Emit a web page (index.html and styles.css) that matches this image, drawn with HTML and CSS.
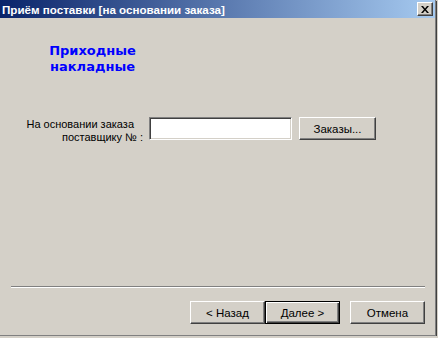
FILE: index.html
```html
<!DOCTYPE html>
<html lang="ru">
<head>
    <meta charset="UTF-8">
    <title>Приём поставки [на основании заказа]</title>
    <link rel="stylesheet" href="styles.css">
</head>
<body>

    <div class="window">
        <div class="titlebar">
            <span class="title">Приём поставки [на основании заказа]</span>
            <button class="close-btn" type="button" aria-label="Закрыть">
                <svg width="8" height="7" viewBox="0 0 8 7">
                    <path d="M0 0h2l2 2.5L6 0h2L5 3.5 8 7H6L4 4.5 2 7H0l3-3.5z" fill="#000"/>
                </svg>
            </button>
        </div>

        <div class="wizard-body">
            <h2 class="page-heading">Приходные<br>накладные</h2>

            <div class="order-row">
                <label class="order-label" for="orderNo">
                    <span class="first-line">На основании заказа</span><br>
                    поставщику № :
                </label>
                <input class="field" type="text" id="orderNo">
                <button class="btn" type="button">Заказы...</button>
            </div>

            <div class="spacer"></div>

            <div class="separator"></div>

            <div class="nav-row">
                <button class="btn nav-btn" type="button">&lt; Назад</button>
                <button class="btn nav-btn default" type="button">Далее &gt;</button>
                <button class="btn nav-btn cancel" type="button">Отмена</button>
            </div>
        </div>
    </div>

</body>
</html>
```

FILE: styles.css
```css
/* Klassisches Windows-Dialogfenster */
body {
    margin: 0;
    background-color: #d4d0c8;
    font-family: "Liberation Sans", Arial, sans-serif;
    font-size: 11px;
    color: #000000;
}

.window {
    width: 435px;
    height: 335px;
    display: flex;
    flex-direction: column;
    background-color: #d4d0c8;
    border-right: 1px solid #808080;
    border-bottom: 1px solid #808080;
    box-shadow: 1px 1px 0 #404040;
}

.titlebar {
    height: 18px;
    display: flex;
    align-items: center;
    justify-content: space-between;
    padding: 0 2px 0 2px;
    background: linear-gradient(to right, #0a246a, #a6caf0);
    color: #ffffff;
}

.title {
    font-family: "Liberation Sans", Arial, sans-serif;
    font-weight: bold;
    font-size: 11.6px;
    white-space: nowrap;
}

.close-btn {
    width: 16px;
    height: 14px;
    padding: 0;
    margin: 0;
    display: flex;
    align-items: center;
    justify-content: center;
    background-color: #d4d0c8;
    border: 1px solid;
    border-color: #ffffff #404040 #404040 #ffffff;
    box-shadow: inset -1px -1px 0 #808080;
}

.wizard-body {
    flex: 1;
    display: flex;
    flex-direction: column;
    padding: 25px 10px 11px 0;
}

.page-heading {
    width: 185px;
    margin: 0;
    text-align: center;
    font-family: "DejaVu Sans", Verdana, sans-serif;
    font-size: 13px;
    line-height: 16px;
    font-weight: bold;
    color: #0000ff;
}

.order-row {
    display: flex;
    align-items: flex-start;
    margin-top: 42px;
}

.order-label {
    width: 143px;
    padding-top: 1px;
    text-align: right;
    line-height: 13px;
}

.order-label .first-line {
    margin-right: 9px;
}

.field {
    box-sizing: border-box;
    width: 143px;
    height: 23px;
    margin: 0 0 0 6px;
    padding: 2px 3px;
    background-color: #ffffff;
    border: 1px solid;
    border-color: #808080 #ffffff #ffffff #808080;
    box-shadow: inset 1px 1px 0 #404040, inset -1px -1px 0 #d4d0c8;
    outline: none;
}

.btn {
    box-sizing: border-box;
    width: 77px;
    height: 23px;
    margin: 0 0 0 7px;
    padding: 0;
    font-family: "Liberation Sans", Arial, sans-serif;
    font-size: 11.5px;
    color: #000000;
    background-color: #d4d0c8;
    border: 1px solid;
    border-color: #ffffff #404040 #404040 #ffffff;
    box-shadow: inset -1px -1px 0 #808080;
}

.spacer {
    flex: 1;
}

.separator {
    margin-left: 11px;
    border-top: 1px solid #808080;
    border-bottom: 1px solid #ffffff;
}

.nav-row {
    display: flex;
    justify-content: flex-end;
    margin-top: 13px;
}

.nav-btn {
    width: 75px;
    margin: 0;
}

.nav-btn.default {
    border: 1px solid #000000;
    box-shadow: inset 1px 1px 0 #ffffff, inset -1px -1px 0 #404040, inset -2px -2px 0 #808080;
}

.nav-btn.cancel {
    margin-left: 10px;
}
```
